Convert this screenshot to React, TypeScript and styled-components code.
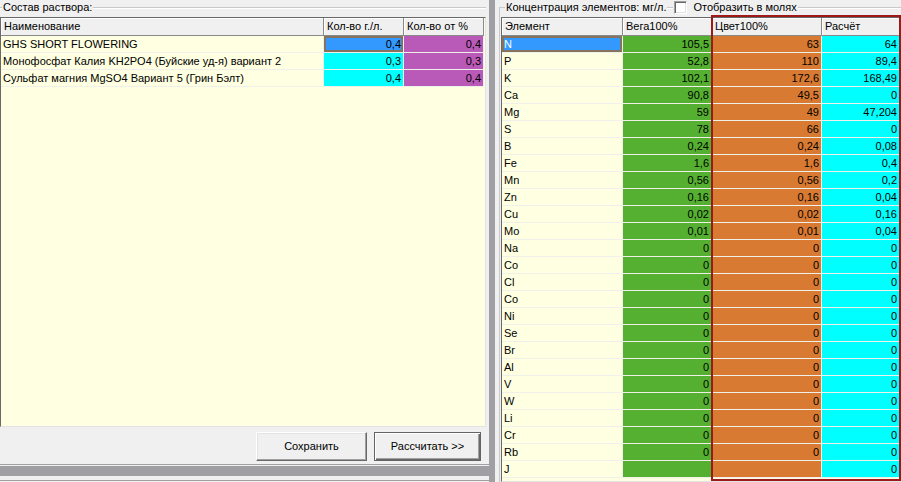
import React from 'react';
import styled, { createGlobalStyle } from 'styled-components';

const Global = createGlobalStyle`
  html, body { margin: 0; padding: 0; background: #f0f0f0; }
  body { font-family: "Liberation Sans", Arial, sans-serif; font-size: 11px; color: #000; }
  * { box-sizing: border-box; }
`;

const YELLOW = '#ffffe1';
const GRID = '#f0f0ea';
const BLUE = '#3399ff';
const CYAN = '#00ffff';
const PURPLE = '#b95ab9';
const GREEN = '#55b031';
const ORANGE = '#d87a31';

const Window = styled.div`
  width: 901px;
  height: 482px;
  display: flex;
  overflow: hidden;
  background: #f0f0f0;
`;

const LeftPane = styled.div`
  width: 489px;
  flex: none;
  display: flex;
  flex-direction: column;
`;

const VSplitter = styled.div`
  width: 6px;
  flex: none;
  background: #a0a0a4;
`;

const RightPane = styled.div`
  flex: 1;
  min-width: 0;
  display: flex;
  flex-direction: column;
  padding-left: 4px;
  position: relative;
`;

const Group = styled.div`
  flex: 1;
  min-height: 0;
  display: flex;
  flex-direction: column;
  padding-right: 3px;
`;

const GroupHeader = styled.div`
  height: 17px;
  flex: none;
  display: flex;
  align-items: flex-start;
  white-space: nowrap;
`;

const Seg = styled.div<{ $w?: number; $corner?: boolean }>`
  flex: ${p => (p.$w ? `0 0 ${p.$w}px` : '1')};
  margin-top: 7px;
  height: ${p => (p.$corner ? '10px' : '2px')};
  border-top: 1px solid #c9c9c9;
  border-left: ${p => (p.$corner ? '1px solid #c9c9c9' : 'none')};
  box-shadow: ${p => (p.$corner ? 'none' : 'inset 0 1px 0 #fff')};
`;

const Title = styled.span`
  line-height: 15px;
  padding: 0 1px;
`;

const GroupBody = styled.div`
  flex: 1;
  min-height: 0;
  display: flex;
  flex-direction: column;
  border-left: 1px solid #c9c9c9;
  padding-left: 1px;
`;

const Table = styled.div`
  flex: 1;
  min-height: 0;
  overflow: hidden;
  background: ${YELLOW};
  border: 1px solid;
  border-color: #696969 #e3e3e3 #e3e3e3 #696969;
`;

const Row = styled.div<{ $cols: string; $head?: boolean }>`
  display: grid;
  grid-template-columns: ${p => p.$cols};
  height: ${p => (p.$head ? 18 : 17)}px;
`;

const HeadCell = styled.div`
  background: #f0f0f0;
  border-right: 1px solid #8a8a8a;
  border-bottom: 1px solid #8a8a8a;
  box-shadow: inset 1px 1px 0 #fff;
  padding-left: 3px;
  line-height: 17px;
  white-space: nowrap;
  overflow: hidden;
`;

const Cell = styled.div<{ $bg?: string; $right?: boolean; $sel?: boolean }>`
  background: ${p => p.$bg || YELLOW};
  color: ${p => (p.$sel && p.$bg === BLUE && !p.$right ? '#fff' : '#000')};
  border-right: 1px solid ${GRID};
  border-bottom: 1px solid ${GRID};
  line-height: 16px;
  padding: ${p => (p.$right ? '0 2px 0 0' : '0 0 0 2px')};
  text-align: ${p => (p.$right ? 'right' : 'left')};
  white-space: nowrap;
  overflow: hidden;
  box-shadow: ${p => (p.$sel ? 'inset 0 0 0 2px #85735f' : 'none')};
`;

const ButtonBar = styled.div`
  height: 37px;
  flex: none;
  display: flex;
  align-items: center;
  justify-content: flex-end;
  gap: 7px;
  padding: 1px 8px 0 0;
`;

const Button = styled.button<{ $w: number; $default?: boolean }>`
  width: ${p => p.$w}px;
  height: 29px;
  font: inherit;
  color: #000;
  background: #f0f0f0;
  border: 1px solid;
  border-color: ${p => (p.$default ? '#646464' : '#fff #696969 #696969 #fff')};
  box-shadow: ${p =>
    p.$default
      ? 'inset 1px 1px 0 #fff, inset -1px -1px 0 #696969, inset -2px -2px 0 #a0a0a0'
      : 'inset -1px -1px 0 #a0a0a0, inset 1px 1px 0 #e3e3e3'};
  padding: 0;
`;

const BottomStrip = styled.div`
  height: 18px;
  flex: none;
  border-top: 1px solid #a0a0a0;
  padding-top: 1px;
`;

const Band = styled.div`
  height: 10px;
  background: #a0a0a4;
`;

const LowerEdge = styled.div`
  margin-top: 4px;
  border-top: 1px solid #a0a0a0;
`;

const CheckBox = styled.span`
  width: 13px;
  height: 13px;
  margin: 1px 5px 0 1px;
  flex: none;
  background: #fff;
  border: 1px solid;
  border-color: #a0a0a0 #fff #fff #a0a0a0;
  box-shadow: inset 1px 1px 0 #696969, inset -1px -1px 0 #e3e3e3;
`;

const Highlight = styled.div`
  position: absolute;
  left: 216px;
  top: 15px;
  right: 0;
  bottom: 1px;
  border: 2px solid #9e1a1a;
  pointer-events: none;
`;

const LEFT_COLS = '323px 80px 80px';
const RIGHT_COLS = '121px 89px 110px 78px';

const solution = [
  { name: 'GHS SHORT FLOWERING', g: '0,4', p: '0,4' },
  { name: 'Монофосфат Калия KH2PO4 (Буйские уд-я) вариант 2', g: '0,3', p: '0,3' },
  { name: 'Сульфат магния MgSO4 Вариант 5 (Грин Бэлт)', g: '0,4', p: '0,4' },
];

const elements: [string, string, string, string][] = [
  ['N', '105,5', '63', '64'],
  ['P', '52,8', '110', '89,4'],
  ['K', '102,1', '172,6', '168,49'],
  ['Ca', '90,8', '49,5', '0'],
  ['Mg', '59', '49', '47,204'],
  ['S', '78', '66', '0'],
  ['B', '0,24', '0,24', '0,08'],
  ['Fe', '1,6', '1,6', '0,4'],
  ['Mn', '0,56', '0,56', '0,2'],
  ['Zn', '0,16', '0,16', '0,04'],
  ['Cu', '0,02', '0,02', '0,16'],
  ['Mo', '0,01', '0,01', '0,04'],
  ['Na', '0', '0', '0'],
  ['Co', '0', '0', '0'],
  ['Cl', '0', '0', '0'],
  ['Co', '0', '0', '0'],
  ['Ni', '0', '0', '0'],
  ['Se', '0', '0', '0'],
  ['Br', '0', '0', '0'],
  ['Al', '0', '0', '0'],
  ['V', '0', '0', '0'],
  ['W', '0', '0', '0'],
  ['Li', '0', '0', '0'],
  ['Cr', '0', '0', '0'],
  ['Rb', '0', '0', '0'],
  ['J', '', '', '0'],
];

export default function App() {
  return (
    <>
      <Global />
      <Window>
        <LeftPane>
          <Group>
            <GroupHeader>
              <Seg $w={2} />
              <Title>Состав раствора:</Title>
              <Seg />
            </GroupHeader>
            <Table>
              <Row $cols={LEFT_COLS} $head>
                <HeadCell>Наименование</HeadCell>
                <HeadCell>Кол-во г./л.</HeadCell>
                <HeadCell>Кол-во от %</HeadCell>
              </Row>
              {solution.map((r, i) => (
                <Row key={i} $cols={LEFT_COLS}>
                  <Cell>{r.name}</Cell>
                  <Cell $right $bg={i === 0 ? BLUE : CYAN} $sel={i === 0}>{r.g}</Cell>
                  <Cell $right $bg={PURPLE}>{r.p}</Cell>
                </Row>
              ))}
            </Table>
          </Group>
          <ButtonBar>
            <Button $w={111}>Сохранить</Button>
            <Button $w={107} $default>Рассчитать &gt;&gt;</Button>
          </ButtonBar>
          <BottomStrip>
            <Band />
            <LowerEdge />
          </BottomStrip>
        </LeftPane>
        <VSplitter />
        <RightPane>
          <GroupHeader>
            <Seg $w={6} $corner />
            <Title>Концентрация элементов: мг/л.</Title>
            <Seg $w={6} />
            <CheckBox />
            <Title>Отобразить в молях</Title>
            <Seg />
          </GroupHeader>
          <GroupBody>
            <Table>
              <Row $cols={RIGHT_COLS} $head>
                <HeadCell>Элемент</HeadCell>
                <HeadCell>Вега100%</HeadCell>
                <HeadCell>Цвет100%</HeadCell>
                <HeadCell>Расчёт</HeadCell>
              </Row>
              {elements.map((e, i) => (
                <Row key={i} $cols={RIGHT_COLS}>
                  <Cell $bg={i === 0 ? BLUE : YELLOW} $sel={i === 0}>{e[0]}</Cell>
                  <Cell $right $bg={GREEN}>{e[1]}</Cell>
                  <Cell $right $bg={ORANGE}>{e[2]}</Cell>
                  <Cell $right $bg={CYAN}>{e[3]}</Cell>
                </Row>
              ))}
            </Table>
          </GroupBody>
          <Highlight />
        </RightPane>
      </Window>
    </>
  );
}
